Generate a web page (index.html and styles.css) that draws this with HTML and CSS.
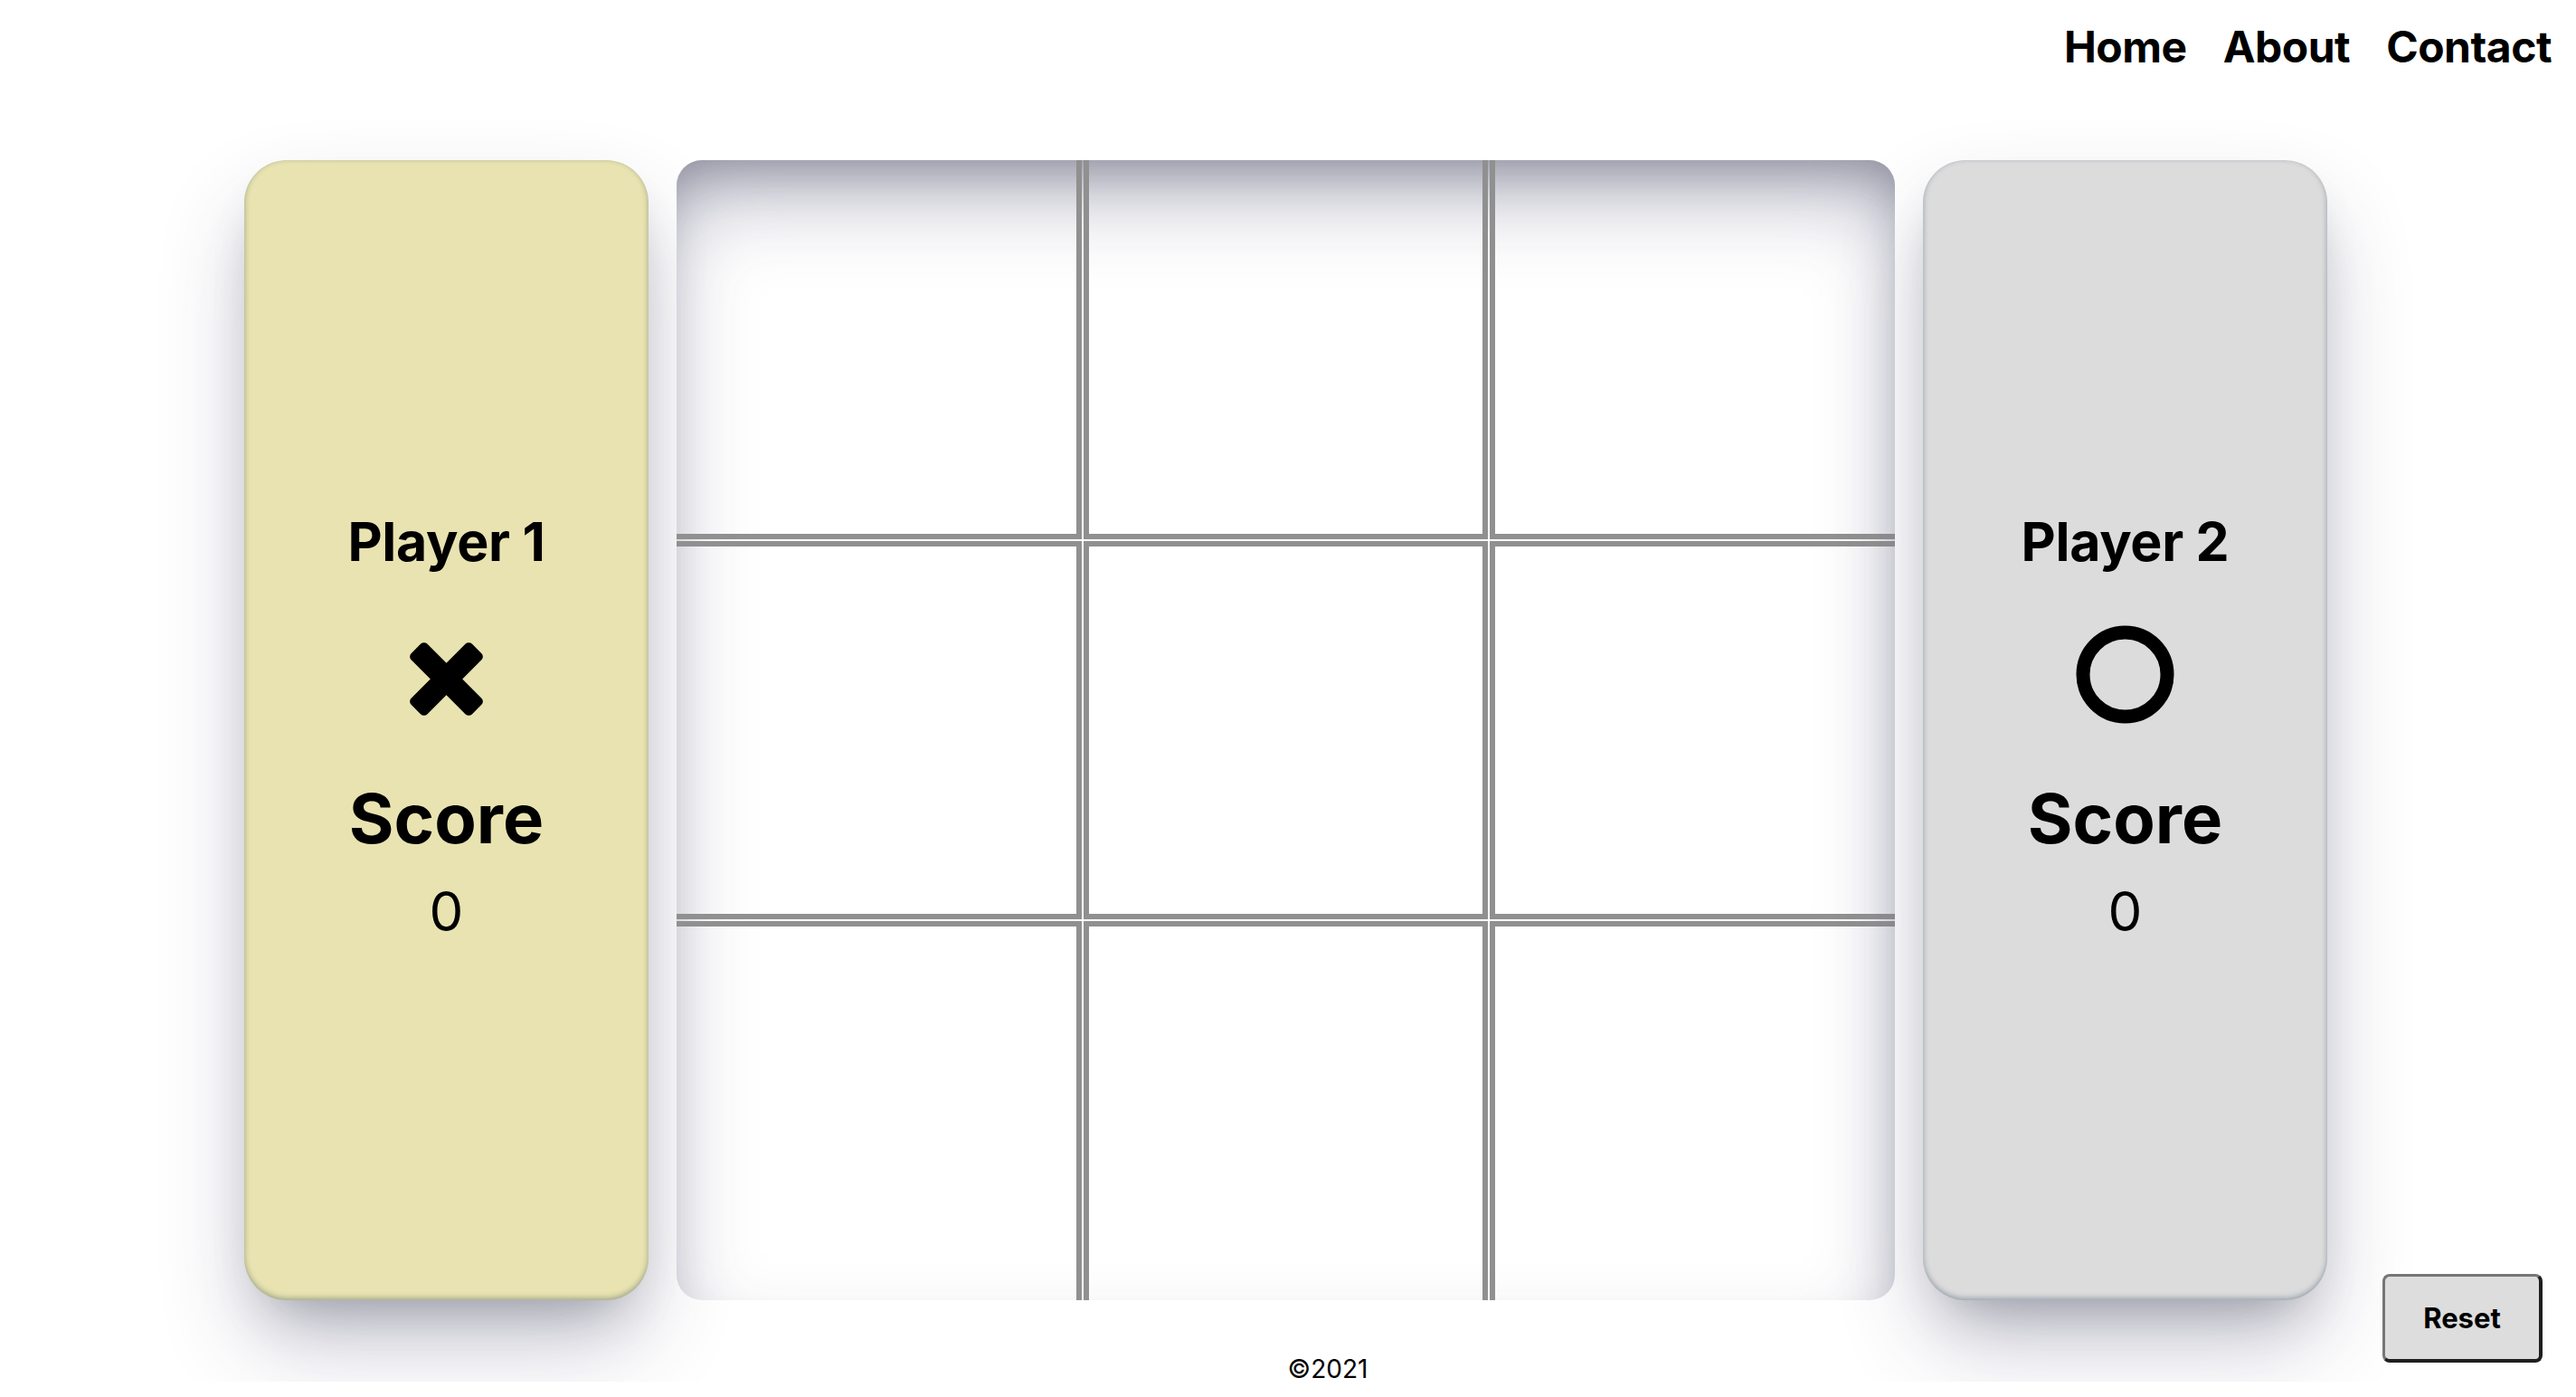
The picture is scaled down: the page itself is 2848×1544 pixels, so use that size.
FILE: index.html
```html
<!DOCTYPE html>
<html lang="en">
<head>
<meta charset="utf-8">
<title>Tic Tac Toe</title>
<link rel="stylesheet" href="styles.css">
</head>
<body>
<header class="nav">
  <a class="nav-link" href="#">Home</a>
  <a class="nav-link" href="#">About</a>
  <a class="nav-link" href="#">Contact</a>
</header>
<main class="game">
  <section class="player player-one">
    <h2 class="player-name">Player 1</h2>
    <div class="player-mark">
      <svg class="mark-x" viewBox="0 0 85 85" width="85" height="85" aria-hidden="true">
        <rect x="-5" y="30" width="95" height="25" rx="5" transform="rotate(45 42.5 42.5)"/>
        <rect x="-5" y="30" width="95" height="25" rx="5" transform="rotate(-45 42.5 42.5)"/>
      </svg>
    </div>
    <h3 class="score-label">Score</h3>
    <p class="score-value">0</p>
  </section>
  <div class="board">
    <div class="cell"></div><div class="cell"></div><div class="cell"></div>
    <div class="cell"></div><div class="cell"></div><div class="cell"></div>
    <div class="cell"></div><div class="cell"></div><div class="cell"></div>
  </div>
  <section class="player player-two">
    <h2 class="player-name">Player 2</h2>
    <div class="player-mark">
      <svg class="mark-o" viewBox="0 0 109 109" width="109" height="109" aria-hidden="true">
        <circle cx="54.5" cy="54.5" r="46.5" fill="none" stroke="#000" stroke-width="15"/>
      </svg>
    </div>
    <h3 class="score-label">Score</h3>
    <p class="score-value">0</p>
  </section>
</main>
<footer class="footer">
  <span class="copyright">©2021</span>
</footer>
<button class="reset" type="button">Reset</button>
</body>
</html>
```
FILE: styles.css
```css
html, body {
  margin: 0;
  padding: 0;
  background: #ffffff;
}

body {
  font-family: Inter, "Noto Sans", "Liberation Sans", sans-serif;
  color: #000;
}

.nav {
  display: flex;
  justify-content: flex-end;
  gap: 40px;
  padding: 28px 27px 0 0;
}

.nav-link {
  font-size: 48px;
  font-weight: 700;
  line-height: 1;
  color: #000;
  text-decoration: none;
  letter-spacing: -0.5px;
}

.game {
  display: flex;
  gap: 31px;
  padding-left: 270px;
  margin-top: 101px;
  height: 1260px;
}

.player {
  width: 447px;
  flex: none;
  box-sizing: border-box;
  border-radius: 47px;
  display: flex;
  flex-direction: column;
  align-items: center;
  justify-content: flex-start;
  padding-top: 392px;
  box-shadow: rgba(50, 50, 93, 0.3) 0px 50px 100px -10px,
              rgba(0, 0, 0, 0.3) 0px 30px 60px -30px,
              rgba(10, 37, 64, 0.35) 0px -2px 6px 0px inset;
}

.player-one {
  background: #e8e3b0;
}

.player-two {
  background: #dcdcdd;
}

.player-name {
  margin: 0;
  font-size: 59px;
  font-weight: 700;
  line-height: 1;
  letter-spacing: -0.3px;
}

.player-mark {
  height: 108px;
  margin-top: 68px;
  display: flex;
  align-items: center;
  justify-content: center;
}

.mark-x {
  display: block;
  fill: #000;
}

.mark-o {
  display: block;
  margin-top: -9px;
}

.score-label {
  margin: 62px 0 0;
  font-size: 76px;
  font-weight: 700;
  line-height: 1;
}

.score-value {
  margin: 35px 0 0;
  font-size: 60px;
  font-weight: 400;
  line-height: 1;
}

.board {
  width: 1347px;
  flex: none;
  display: grid;
  grid-template-columns: repeat(3, 1fr);
  grid-template-rows: repeat(3, 1fr);
  gap: 2px;
  border-radius: 28px;
  background: #ffffff;
  box-shadow: rgba(50, 50, 93, 0.42) 0px 50px 100px -20px inset,
              rgba(0, 0, 0, 0.3) 0px 30px 60px -30px inset;
}

.cell {
  border: 6px solid #909090;
}

.cell:nth-child(-n+3) {
  border-top: 0;
}

.cell:nth-child(n+7) {
  border-bottom: 0;
}

.cell:nth-child(3n+1) {
  border-left: 0;
}

.cell:nth-child(3n) {
  border-right: 0;
}

.footer {
  display: flex;
  justify-content: center;
  padding-left: 88px;
  margin-top: 62px;
}

.copyright {
  font-size: 28px;
  font-weight: 400;
  line-height: 1;
}

.reset {
  position: fixed;
  right: 37px;
  bottom: 38px;
  width: 177px;
  height: 98px;
  box-sizing: border-box;
  background: #dddddd;
  border-style: solid;
  border-width: 3px 4px 4px 3px;
  border-color: #767676 #1f1f1f #1f1f1f #767676;
  border-radius: 8px;
  font-family: Inter, "Noto Sans", "Liberation Sans", sans-serif;
  font-size: 31px;
  font-weight: 700;
  color: #000;
  padding: 0;
}
```
